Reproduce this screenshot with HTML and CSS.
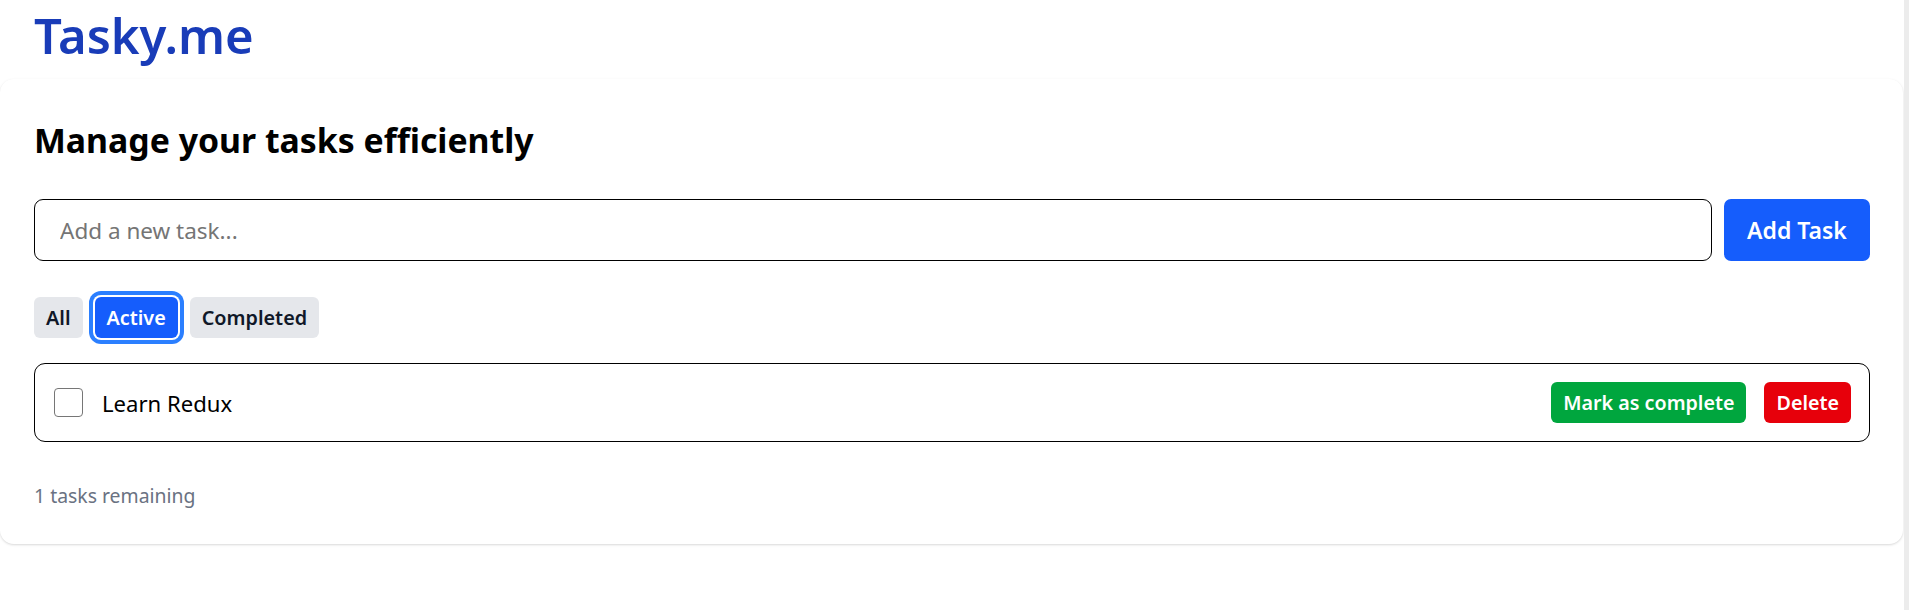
FILE: index.html
```html
<!DOCTYPE html>
<html lang="en">
<head>
<meta charset="utf-8">
<title>Tasky.me</title>
<link rel="stylesheet" href="styles.css">
</head>
<body>
<div class="page">
  <main class="main">
    <header class="header">
      <h1 class="brand">Tasky.me</h1>
    </header>
    <section class="card">
      <h2 class="heading">Manage your tasks efficiently</h2>
      <form class="add-row">
        <input class="task-input" type="text" placeholder="Add a new task...">
        <button class="btn btn-add" type="button">Add Task</button>
      </form>
      <div class="filters">
        <button class="filter" type="button">All</button>
        <button class="filter filter-active" type="button">Active</button>
        <button class="filter" type="button">Completed</button>
      </div>
      <ul class="task-list">
        <li class="task">
          <input class="task-check" type="checkbox">
          <span class="task-text">Learn Redux</span>
          <div class="task-actions">
            <button class="btn btn-small btn-complete" type="button">Mark as complete</button>
            <button class="btn btn-small btn-delete" type="button">Delete</button>
          </div>
        </li>
      </ul>
      <p class="remaining">1 tasks remaining</p>
    </section>
  </main>
  <div class="edge"></div>
</div>
</body>
</html>
```

FILE: styles.css
```css
* { box-sizing: border-box; }

html, body {
  margin: 0;
  padding: 0;
  background: #ffffff;
  font-family: "Noto Sans", "Open Sans", sans-serif;
  color: #000;
}

.page {
  display: flex;
  min-height: 610px;
}

.main {
  flex: 1;
  min-width: 0;
  padding-right: 1px;
}

.edge {
  width: 5px;
  background: #ececec;
}

.header {
  padding: 11px 34px 20px;
}

.brand {
  margin: 0;
  font-size: 49px;
  line-height: 48px;
  font-weight: 600;
  color: #193cb8;
}

.card {
  background: #fff;
  border-radius: 14px;
  box-shadow: 0 1px 3px rgba(0, 0, 0, 0.1), 0 1px 2px rgba(0, 0, 0, 0.06);
  padding: 41px 33px 34px 34px;
}

.heading {
  margin: 0;
  font-size: 33.8px;
  line-height: 41px;
  font-weight: 700;
}

.add-row {
  margin: 38px 0 0;
  display: flex;
  gap: 12px;
}

.task-input {
  flex: 1;
  height: 62px;
  border: 1px solid #000;
  border-radius: 9px;
  padding: 0 25px;
  font-family: inherit;
  font-size: 22.5px;
  color: #000;
  outline: none;
}

.task-input::placeholder {
  color: #757575;
}

.btn {
  border: none;
  color: #fff;
  font-family: inherit;
  font-weight: 600;
  cursor: pointer;
}

.btn-add {
  width: 146px;
  height: 62px;
  border-radius: 7px;
  background: #155dfc;
  font-size: 23px;
}

.filters {
  margin-top: 36px;
  display: flex;
  gap: 12px;
}

.filter {
  height: 41px;
  padding: 0 12px;
  border: none;
  border-radius: 6px;
  background: #e5e7eb;
  color: #101828;
  font-family: inherit;
  font-size: 19.8px;
  font-weight: 600;
}

.filter-active {
  background: #155dfc;
  color: #fff;
  box-shadow: 0 0 0 2px #fff, 0 0 0 6px #2b7fff;
}

.task-list {
  list-style: none;
  margin: 25px 0 0;
  padding: 0;
}

.task {
  display: flex;
  align-items: center;
  height: 79px;
  border: 1px solid #000;
  border-radius: 11px;
  padding: 0 18px 0 19px;
}

.task-check {
  appearance: none;
  -webkit-appearance: none;
  margin: 0;
  width: 29px;
  height: 29px;
  border: 1.5px solid #767676;
  border-radius: 4px;
  background: #fff;
}

.task-text {
  margin-left: 19px;
  flex: 1;
  font-size: 22.1px;
}

.task-actions {
  display: flex;
  gap: 18px;
}

.btn-small {
  height: 41px;
  padding: 0 12px;
  border-radius: 6px;
  font-size: 19.7px;
}

.btn-complete { background: #00a63e; }
.btn-delete { background: #e7000b; }

.remaining {
  margin: 40px 0 0;
  font-size: 19.4px;
  line-height: 28px;
  color: #6a7282;
}
```
